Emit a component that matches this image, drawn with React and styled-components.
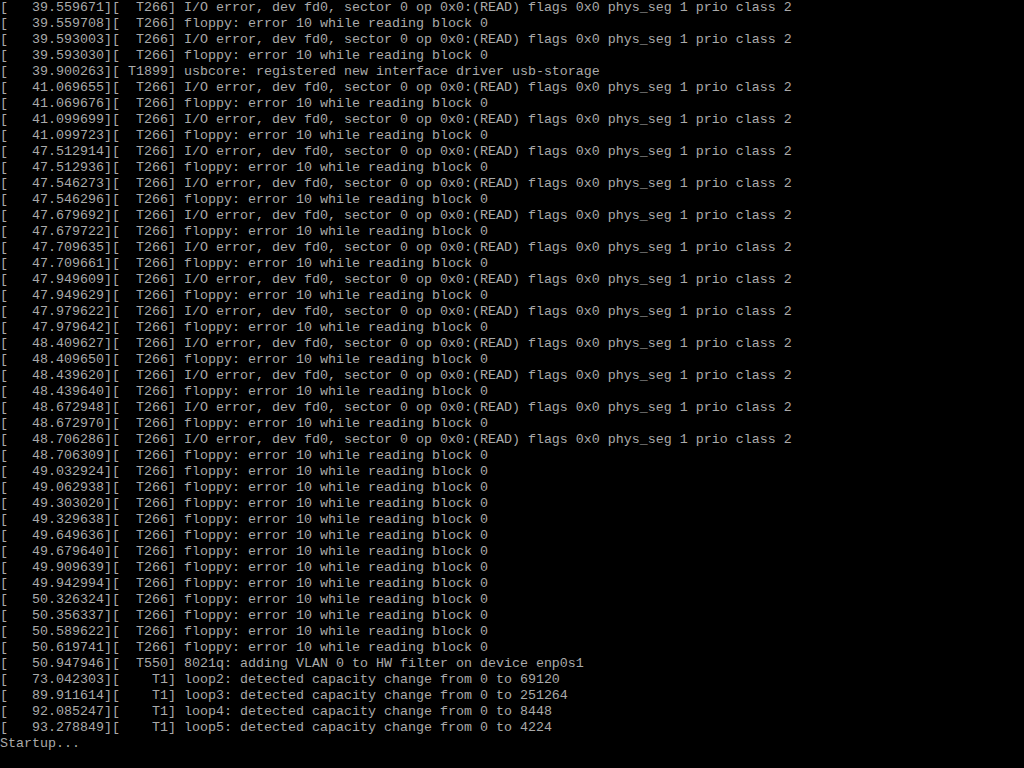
import React from 'react'
import styled, { createGlobalStyle } from 'styled-components'

const GlobalStyle = createGlobalStyle`
  html, body {
    margin: 0;
    padding: 0;
    background: #000;
  }
`

const IOERR = 'I/O error, dev fd0, sector 0 op 0x0:(READ) flags 0x0 phys_seg 1 prio class 2'
const FLOPPY = 'floppy: error 10 while reading block 0'

// [timestamp, thread, message]
const log = [
  ['39.559671', 'T266', IOERR],
  ['39.559708', 'T266', FLOPPY],
  ['39.593003', 'T266', IOERR],
  ['39.593030', 'T266', FLOPPY],
  ['39.900263', 'T1899', 'usbcore: registered new interface driver usb-storage'],
  ['41.069655', 'T266', IOERR],
  ['41.069676', 'T266', FLOPPY],
  ['41.099699', 'T266', IOERR],
  ['41.099723', 'T266', FLOPPY],
  ['47.512914', 'T266', IOERR],
  ['47.512936', 'T266', FLOPPY],
  ['47.546273', 'T266', IOERR],
  ['47.546296', 'T266', FLOPPY],
  ['47.679692', 'T266', IOERR],
  ['47.679722', 'T266', FLOPPY],
  ['47.709635', 'T266', IOERR],
  ['47.709661', 'T266', FLOPPY],
  ['47.949609', 'T266', IOERR],
  ['47.949629', 'T266', FLOPPY],
  ['47.979622', 'T266', IOERR],
  ['47.979642', 'T266', FLOPPY],
  ['48.409627', 'T266', IOERR],
  ['48.409650', 'T266', FLOPPY],
  ['48.439620', 'T266', IOERR],
  ['48.439640', 'T266', FLOPPY],
  ['48.672948', 'T266', IOERR],
  ['48.672970', 'T266', FLOPPY],
  ['48.706286', 'T266', IOERR],
  ['48.706309', 'T266', FLOPPY],
  ['49.032924', 'T266', FLOPPY],
  ['49.062938', 'T266', FLOPPY],
  ['49.303020', 'T266', FLOPPY],
  ['49.329638', 'T266', FLOPPY],
  ['49.649636', 'T266', FLOPPY],
  ['49.679640', 'T266', FLOPPY],
  ['49.909639', 'T266', FLOPPY],
  ['49.942994', 'T266', FLOPPY],
  ['50.326324', 'T266', FLOPPY],
  ['50.356337', 'T266', FLOPPY],
  ['50.589622', 'T266', FLOPPY],
  ['50.619741', 'T266', FLOPPY],
  ['50.947946', 'T550', '8021q: adding VLAN 0 to HW filter on device enp0s1'],
  ['73.042303', 'T1', 'loop2: detected capacity change from 0 to 69120'],
  ['89.911614', 'T1', 'loop3: detected capacity change from 0 to 251264'],
  ['92.085247', 'T1', 'loop4: detected capacity change from 0 to 8448'],
  ['93.278849', 'T1', 'loop5: detected capacity change from 0 to 4224'],
]

const formatLine = ([ts, tid, msg]) =>
  `[${ts.padStart(12, ' ')}][${tid.padStart(6, ' ')}] ${msg}`

function App() {
  return (
    <>
      <GlobalStyle />
      <Console>
        {log.map((entry, i) => (
          <Line key={i}>{formatLine(entry)}</Line>
        ))}
        <Line>Startup...</Line>
      </Console>
    </>
  )
}

const Console = styled.div`
  width: 1024px;
  height: 768px;
  overflow: hidden;
  background: #000;
  color: #aaaaaa;
  font-family: "Liberation Mono", "DejaVu Sans Mono", monospace;
  font-size: 13.333px;
  line-height: 16px;
  display: flex;
  flex-direction: column;
`

const Line = styled.div`
  height: 16px;
  white-space: pre;
`

export default App
